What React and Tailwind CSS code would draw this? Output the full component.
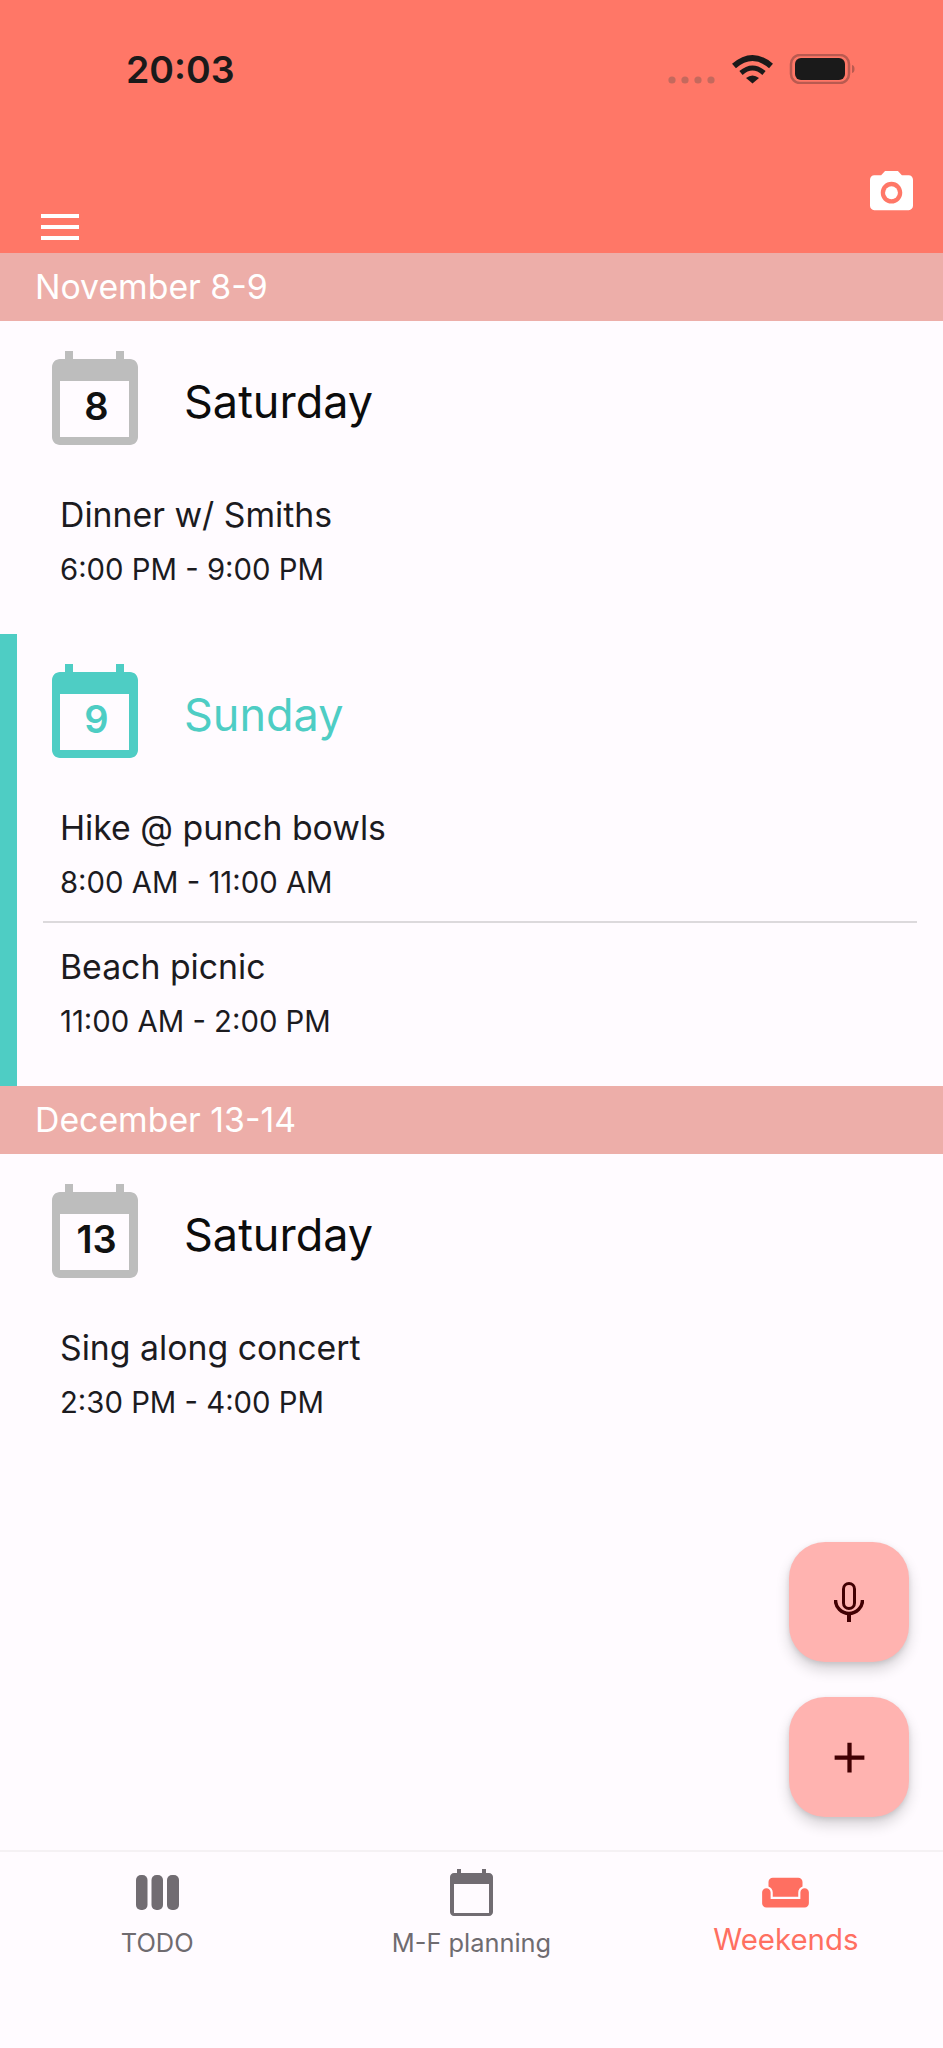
const FONT = "font-['Inter','Noto_Sans',sans-serif]";

function CalendarIcon({ day, colorText, colorFill }) {
  return (
    <div className="relative w-[86px] h-[94px] shrink-0">
      <svg width="86" height="94" viewBox="0 0 86 94" className={colorFill}>
        <path
          fill="currentColor"
          fillRule="evenodd"
          d="M13 0h8v8h43V0h8v8h6c4.4 0 8 3.6 8 8v70c0 4.4-3.6 8-8 8H8c-4.4 0-8-3.6-8-8V16c0-4.4 3.6-8 8-8h5V0zM8 30v56h69V30H8z"
        />
      </svg>
      <div className={`absolute left-[8px] right-[9px] top-[30px] h-[56px] flex items-center justify-center text-[38px] font-semibold leading-none ${colorText}`}>
        <span className="relative left-[2px] top-[-3px]">{day}</span>
      </div>
    </div>
  );
}

function Event({ title, time }) {
  return (
    <div className="h-[138px] pl-[60px] pt-[22px]">
      <div className="h-[44px] flex items-center text-[#1c1b1f] text-[33.8px] leading-none">{title}</div>
      <div className="mt-[8px] h-[50px] flex items-center text-[#1c1b1f] text-[29.3px] leading-none">{time}</div>
    </div>
  );
}

function Day({ day, name, active, events }) {
  return (
    <section className={`relative pb-[25px] ${active ? "border-l-[17px] border-[#4ecdc4]" : ""}`}>
      <div className={`h-[150px] pt-[30px] flex items-start ${active ? "pl-[35px]" : "pl-[52px]"}`}>
        <CalendarIcon
          day={day}
          colorText={active ? "text-[#4ecdc4]" : "text-[#111111]"}
          colorFill={active ? "text-[#4ecdc4]" : "text-[#bdbdbd]"}
        />
        <div className={`ml-[46px] mt-[3px] h-[94px] flex items-center text-[45px] leading-none ${active ? "text-[#4ecdc4]" : "text-[#0c0c0c]"}`}>
          {name}
        </div>
      </div>
      <div>
        {events.map((e, i) => (
          <div key={e.title}>
            {i > 0 && <div className="h-[2px] -mt-[1px] ml-[26px] mr-[26px] bg-[#dcd9dc]" />}
            <div className={active ? "-ml-[17px]" : ""}>
              <Event title={e.title} time={e.time} />
            </div>
          </div>
        ))}
      </div>
    </section>
  );
}

function Banner({ children }) {
  return (
    <div className="h-[68px] bg-[#edaea9] text-white text-[33.8px] pl-[35px] flex items-center leading-none">
      {children}
    </div>
  );
}

function Fab({ children }) {
  return (
    <button className="w-[120px] h-[120px] rounded-[36px] bg-[#ffb3b0] text-[#410002] flex items-center justify-center shadow-[0_8px_14px_rgba(0,0,0,0.16),0_2px_5px_rgba(0,0,0,0.10)]">
      {children}
    </button>
  );
}

export default function App() {
  return (
    <div className={`w-[943px] h-[2048px] flex flex-col bg-[#fffbff] overflow-hidden ${FONT}`}>
      <header className="relative h-[253px] shrink-0 bg-[#ff7767]">
        <div className="absolute left-[126px] top-[48px] text-[37.5px] leading-[44px] font-semibold text-[#1a1a1a]">
          20:03
        </div>
        <div className="absolute left-[668px] top-[54px]">
          <svg width="190" height="30" viewBox="0 0 190 30">
            <g fill="#c4695d">
              <circle cx="4" cy="26" r="3.6" />
              <circle cx="17" cy="26" r="3.6" />
              <circle cx="30" cy="26" r="3.6" />
              <circle cx="43" cy="26" r="3.6" />
            </g>
            <g fill="none" stroke="#1a1a1a" strokeLinecap="butt">
              <path d="M66 12Q84.500 -4 103 12" strokeWidth="6" />
              <path d="M73 19Q84.500 9 96 19" strokeWidth="5" />
            </g>
            <path d="M78 24Q84.500 19 91 24L84.500 29.500Z" fill="#1a1a1a" />
            <rect x="123" y="1" width="58" height="28" rx="9" fill="none" stroke="#b95a50" strokeWidth="2.500" />
            <rect x="127" y="4" width="50" height="22" rx="6" fill="#1a1a1a" />
            <path d="M184 11c2 .5 2.500 2 2.500 4s-.5 3.500-2.500 4z" fill="#b95a50" />
          </svg>
        </div>
        <svg className="absolute left-[870px] top-[171px] overflow-visible" width="43" height="40" viewBox="2 2 20 18.4" preserveAspectRatio="none">
          <path fill="#ffffff" d="M9 2L7.170 4H4c-1.100 0-2 .9-2 2v12c0 1.100.9 2 2 2h16c1.100 0 2-.9 2-2V6c0-1.100-.9-2-2-2h-3.170L15 2H9zm3 15c-2.760 0-5-2.240-5-5s2.240-5 5-5 5 2.240 5 5-2.240 5-5 5z" />
          <circle cx="12" cy="12" r="3" fill="#ffffff" />
        </svg>
        <div className="absolute left-[41px] top-[214px] w-[38px] h-[26px] flex flex-col justify-between">
          <div className="h-[4px] bg-white" />
          <div className="h-[4px] bg-white" />
          <div className="h-[4px] bg-white" />
        </div>
      </header>

      <main className="relative flex-1">
        <Banner>November 8-9</Banner>
        <Day
          day="8"
          name="Saturday"
          events={[{ title: "Dinner w/ Smiths", time: "6:00 PM - 9:00 PM" }]}
        />
        <Day
          day="9"
          name="Sunday"
          active
          events={[
            { title: "Hike @ punch bowls", time: "8:00 AM - 11:00 AM" },
            { title: "Beach picnic", time: "11:00 AM - 2:00 PM" },
          ]}
        />
        <Banner>December 13-14</Banner>
        <Day
          day="13"
          name="Saturday"
          events={[{ title: "Sing along concert", time: "2:30 PM - 4:00 PM" }]}
        />

        <div className="absolute right-[34px] bottom-[33px] flex flex-col gap-[35px]">
          <Fab>
            <svg width="30" height="40" viewBox="0 0 30 40" fill="none" stroke="currentColor">
              <rect x="9.500" y="1.500" width="11" height="25" rx="5.500" strokeWidth="3" />
              <path d="M1.500 18a13.500 13.500 0 0 0 27 0" strokeWidth="3.500" />
              <path d="M15 31V40" strokeWidth="4" />
            </svg>
          </Fab>
          <Fab>
            <svg width="51" height="51" viewBox="0 0 24 24" fill="currentColor">
              <path d="M19 13h-6v6h-2v-6H5v-2h6V5h2v6h6v2z" />
            </svg>
          </Fab>
        </div>
      </main>

      <nav className="h-[198px] shrink-0 border-t-2 border-[#f5f1f4] grid grid-cols-3 pt-[16px]">
        <div className="flex flex-col items-center text-[#6f6b70]">
          <div className="h-[48px] flex items-center">
            <svg width="43" height="35" viewBox="0 0 43 35" fill="#716c72">
              <rect x="0" y="0" width="11.500" height="35" rx="5" />
              <rect x="15.500" y="0" width="11.500" height="35" rx="5" />
              <rect x="31" y="0" width="12" height="35" rx="5" />
            </svg>
          </div>
          <div className="mt-[10px] text-[25.4px] leading-[34px]">TODO</div>
        </div>
        <div className="flex flex-col items-center text-[#6f6b70]">
          <div className="h-[48px] flex items-center">
            <svg width="43" height="47" viewBox="0 0 43 47" fill="#716c72">
              <path
                fillRule="evenodd"
                d="M7 0h4v4h21V0h4v4h3c2.200 0 4 1.800 4 4v35c0 2.200-1.800 4-4 4H4c-2.200 0-4-1.800-4-4V8c0-2.200 1.800-4 4-4h3V0zM4 15v29h35V15H4z"
              />
            </svg>
          </div>
          <div className="mt-[10px] text-[25.4px] leading-[34px]">M-F planning</div>
        </div>
        <div className="flex flex-col items-center text-[#ff6f61]">
          <div className="h-[48px] flex items-center">
            <svg width="51" height="51" viewBox="0 0 24 24" fill="#ff6f61">
              <path d="M21 10c-1.100 0-2 .9-2 2v3H5v-3c0-1.100-.9-2-2-2s-2 .9-2 2v5c0 1.100.9 2 2 2h18c1.100 0 2-.9 2-2v-5c0-1.100-.9-2-2-2zm-3-5H6c-1.100 0-2 .9-2 2v2.150c1.160.41 2 1.520 2 2.810V14h12v-2.030c0-1.300.84-2.400 2-2.810V7c0-1.100-.9-2-2-2z" />
            </svg>
          </div>
          <div className="mt-[7px] text-[29.4px] leading-[34px]">Weekends</div>
        </div>
      </nav>
    </div>
  );
}
